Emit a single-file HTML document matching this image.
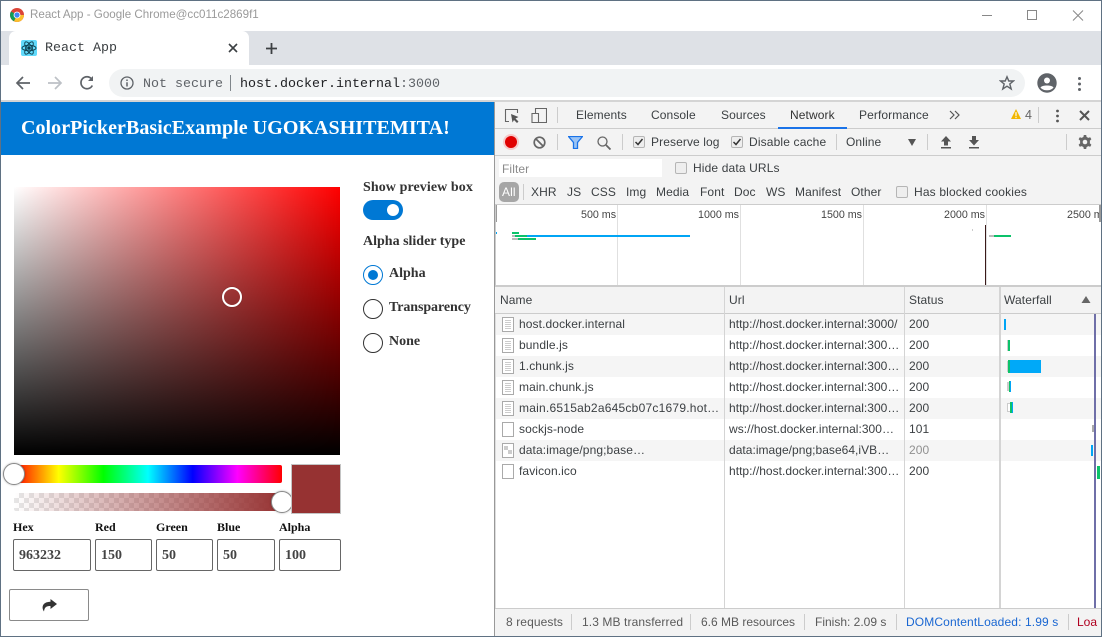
<!DOCTYPE html>
<html><head><meta charset="utf-8"><title>React App</title>
<style>
html,body{margin:0;padding:0;background:#fff}
#r{position:relative;width:1102px;height:637px;overflow:hidden;background:#fff;font-family:"Liberation Sans",sans-serif;font-size:12px;color:#333}
#r div,#r span.a,#r svg{position:absolute}
.t{white-space:nowrap;line-height:14px;height:14px;letter-spacing:.1px}
.u{letter-spacing:.03px}
.ms{font-size:10.700px;color:#444;letter-spacing:0}
.s{font-family:"Liberation Serif",serif;font-weight:bold;white-space:nowrap}
.m{font-family:"Liberation Mono",monospace;font-size:13.33px;white-space:nowrap}
.d{color:#3c4043}
.cb{width:10px;height:10px;border:1px solid #b5b5b5;border-radius:2px;background:#eee}
.sep{width:1px;background:#ccc}
.inp{border:1px solid #666;border-radius:2px;height:30px;background:#fff;box-sizing:content-box;font:bold 14px/32px "Liberation Serif",serif;color:#444}
.lab{font:bold 12px/14px "Liberation Serif",serif;color:#111;top:520px;white-space:nowrap}
.rad{width:18px;height:18px;border:1px solid #333;border-radius:50%;left:363px;background:#fff}
.bar{height:11px}
</style></head><body><div id="r">

<!-- title bar -->
<div style="left:0;top:0;width:1102px;height:31px;background:#fff"></div>
<svg style="left:10px;top:8px" width="14" height="14" viewBox="0 0 14 14"><circle cx="7" cy="7" r="7" fill="#db4437"/><path d="M7 7L1 3.500A7 7 0 0 0 4 13.300Z" fill="#0f9d58"/><path d="M7 7L4 13.300A7 7 0 0 0 14 7Z" fill="#fbc02d"/><circle cx="7" cy="7" r="3.400" fill="#fff"/><circle cx="7" cy="7" r="2.600" fill="#4285f4"/></svg>
<div class="t" style="left:30px;top:8px;font-size:11.600px;letter-spacing:0;color:#9a9a9a">React App - Google Chrome@cc011c2869f1</div>
<svg style="left:980px;top:8px" width="110" height="16" viewBox="0 0 110 16" fill="none" stroke="#888"><path d="M2 7.500H12"/><path d="M47.500 2.500H56.500V11.500H47.500Z"/><path d="M93 2.500L103 12.500M103 2.500L93 12.500"/></svg>

<!-- tab strip -->
<div style="left:0;top:31px;width:1102px;height:34px;background:#dee1e6"></div>
<div style="left:9px;top:31px;width:240px;height:34px;background:#fff;border-radius:7px 7px 0 0"></div>
<div style="left:21px;top:40px;width:16px;height:16px;background:#61dafb;border-radius:2px"></div>
<svg style="left:21px;top:40px" width="16" height="16" viewBox="0 0 16 16" fill="none" stroke="#0b3c4c" stroke-width=".9"><ellipse cx="8" cy="8" rx="7" ry="2.800"/><ellipse cx="8" cy="8" rx="7" ry="2.800" transform="rotate(60 8 8)"/><ellipse cx="8" cy="8" rx="7" ry="2.800" transform="rotate(120 8 8)"/><circle cx="8" cy="8" r="1.300" fill="#0b3c4c"/></svg>
<div class="m d" style="left:45px;top:41px;line-height:16px">React App</div>
<svg style="left:227px;top:42px" width="12" height="12" viewBox="0 0 12 12" stroke="#3c4043" stroke-width="1.600"><path d="M2 2L10 10M10 2L2 10"/></svg>
<svg style="left:265px;top:42px" width="13" height="13" viewBox="0 0 13 13" stroke="#3c4043" stroke-width="1.800"><path d="M6.500 1V12M1 6.500H12"/></svg>

<!-- toolbar -->
<svg style="left:15px;top:75px" width="16" height="16" viewBox="0 0 16 16" fill="none" stroke="#5f6368" stroke-width="1.700"><path d="M15 8H2M8 2L2 8L8 14"/></svg>
<svg style="left:47px;top:75px" width="16" height="16" viewBox="0 0 16 16" fill="none" stroke="#bdc1c6" stroke-width="1.700"><path d="M1 8H14M8 2L14 8L8 14"/></svg>
<svg style="left:79px;top:75px" width="16" height="16" viewBox="0 0 16 16" fill="none" stroke="#5f6368" stroke-width="1.700"><path d="M13.300 10.500A6 6 0 1 1 12.500 3.800"/><path d="M14 1V6H9Z" fill="#5f6368" stroke="none"/></svg>
<div style="left:109px;top:69px;width:916px;height:28px;background:#f1f3f4;border-radius:14px"></div>
<svg style="left:120px;top:76px" width="14" height="14" viewBox="0 0 14 14" fill="none" stroke="#5f6368" stroke-width="1.300"><circle cx="7" cy="7" r="6"/><path d="M7 6.200V10.500M7 3.500V5" stroke-width="1.500"/></svg>
<div class="m" style="left:143px;top:77px;line-height:16px;color:#5f6368">Not secure</div>
<div style="left:230px;top:75px;width:1px;height:16px;background:#80868b"></div>
<div class="m" style="left:240px;top:77px;line-height:16px;color:#202124">host.docker.internal<span style="color:#5f6368">:3000</span></div>
<svg style="left:999px;top:75px" width="16" height="16" viewBox="0 0 16 16" fill="none" stroke="#5f6368" stroke-width="1.400"><path d="M8 1.800L9.800 6H14.500L10.800 9L12.200 14L8 11.200L3.800 14L5.200 9L1.500 6H6.200Z"/></svg>
<svg style="left:1037px;top:73px" width="20" height="20" viewBox="0 0 20 20"><circle cx="10" cy="10" r="9.700" fill="#5f6368"/><circle cx="10" cy="7.500" r="3" fill="#fff"/><path d="M3.500 14.500C5 11.800 15 11.800 16.500 14.500C15 16.500 12.500 17.300 10 17.300C7.500 17.300 5 16.500 3.500 14.500Z" fill="#fff"/></svg>
<svg style="left:1077px;top:76px" width="5" height="16" viewBox="0 0 5 16" fill="#5f6368"><circle cx="2.500" cy="2.500" r="1.500"/><circle cx="2.500" cy="8" r="1.500"/><circle cx="2.500" cy="13.500" r="1.500"/></svg>
<div style="left:0;top:100px;width:1102px;height:2px;background:#d4d4d4"></div>

<!-- page left -->
<div style="left:1px;top:102px;width:493px;height:53px;background:#0078d4"></div>
<div class="s" style="left:21px;top:116px;font-size:20px;letter-spacing:.05px;line-height:24px;color:#fff">ColorPickerBasicExample UGOKASHITEMITA!</div>

<div style="left:14px;top:187px;width:326px;height:268px;background:linear-gradient(to top,#000,rgba(0,0,0,0)),linear-gradient(to right,#fff,#f00)"></div>
<div style="left:222px;top:287px;width:16px;height:16px;border:2px solid #fff;border-radius:50%;box-shadow:0 0 1px rgba(0,0,0,.6)"></div>

<div style="left:14px;top:465px;width:268px;height:18px;border-radius:2px;background:linear-gradient(to right,#f00 0%,#ff0 16.670%,#0f0 33.330%,#0ff 50%,#00f 66.670%,#f0f 83.330%,#f00 100%)"></div>
<div style="left:3px;top:463px;width:20px;height:20px;background:#fff;border:1px solid #8a8a8a;border-radius:50%;box-shadow:0 0 2px rgba(0,0,0,.3)"></div>

<div style="left:14px;top:493px;width:268px;height:18px;border-radius:2px;background:linear-gradient(to right,rgba(150,50,50,0),#963232),conic-gradient(#e6e6e6 25%,#fff 0 50%,#e6e6e6 0 75%,#fff 0) 0 0/10px 10px"></div>
<div style="left:271px;top:491px;width:20px;height:20px;background:#fff;border:1px solid #8a8a8a;border-radius:50%;box-shadow:0 0 2px rgba(0,0,0,.3)"></div>

<div style="left:291px;top:464px;width:48px;height:48px;background:#963232;border:1px solid #c4c4c4"></div>

<div class="lab" style="left:13px">Hex</div>
<div class="lab" style="left:95px">Red</div>
<div class="lab" style="left:156px">Green</div>
<div class="lab" style="left:217px">Blue</div>
<div class="lab" style="left:279px">Alpha</div>
<div class="inp" style="left:13px;top:539px;width:71px;padding-left:5px">963232</div>
<div class="inp" style="left:95px;top:539px;width:50px;padding-left:5px">150</div>
<div class="inp" style="left:156px;top:539px;width:50px;padding-left:5px">50</div>
<div class="inp" style="left:217px;top:539px;width:51px;padding-left:5px">50</div>
<div class="inp" style="left:279px;top:539px;width:55px;padding-left:5px">100</div>

<div style="left:9px;top:589px;width:78px;height:30px;border:1px solid #8a8a8a;border-radius:2px"></div>
<svg style="left:41px;top:598px" width="16" height="14" viewBox="0 0 16 14"><path d="M9.500 1L16 6L9.500 11V8C5.500 8 3.500 9 3 13.500C0.500 10 0.800 4 9.500 3.800Z" fill="#333"/></svg>

<div class="s" style="left:363px;top:180px;font-size:14px;letter-spacing:.08px;line-height:16px;color:#333">Show preview box</div>
<div style="left:363px;top:200px;width:40px;height:20px;background:#0078d4;border-radius:10px"></div>
<div style="left:387px;top:204px;width:12px;height:12px;background:#fff;border-radius:50%"></div>
<div class="s" style="left:363px;top:234px;font-size:14px;line-height:16px;color:#333">Alpha slider type</div>
<div class="rad" style="top:265px;border-color:#0078d4"></div>
<div style="left:368px;top:270px;width:10px;height:10px;background:#0078d4;border-radius:50%"></div>
<div class="rad" style="top:299px"></div>
<div class="rad" style="top:333px"></div>
<div class="s" style="left:389px;top:266px;font-size:14px;line-height:16px;color:#333">Alpha</div>
<div class="s" style="left:389px;top:300px;font-size:14px;letter-spacing:-.08px;line-height:16px;color:#333">Transparency</div>
<div class="s" style="left:389px;top:334px;font-size:14px;line-height:16px;color:#333">None</div>

<!-- devtools -->
<div style="left:494px;top:102px;width:1px;height:535px;background:#999"></div>
<div style="left:495px;top:102px;width:607px;height:26px;background:#f3f3f3"></div>
<div style="left:495px;top:128px;width:607px;height:1px;background:#ccc"></div>
<div style="left:495px;top:129px;width:607px;height:26px;background:#f3f3f3"></div>
<div style="left:495px;top:155px;width:607px;height:1px;background:#ccc"></div>
<div style="left:495px;top:156px;width:607px;height:48px;background:#f3f3f3"></div>
<div style="left:495px;top:204px;width:607px;height:1px;background:#ccc"></div>

<svg style="left:504px;top:108px" width="16" height="16" viewBox="0 0 16 16" fill="none" stroke="#666" stroke-width="1.100"><path d="M5 13.500H1.500V1.500H13.500V5"/><path d="M7 6L14.500 9L11.500 10.500L14.500 13.500L13 15L10 12L8.500 14.500Z" fill="#555" stroke="none"/></svg>
<svg style="left:531px;top:107px" width="16" height="16" viewBox="0 0 16 16" fill="none" stroke="#666" stroke-width="1.100"><path d="M4.500 6V1.500H15.500V15.500H8"/><path d="M1 6.500H7.500V15.500H1Z"/></svg>
<div class="sep" style="left:557px;top:107px;height:16px"></div>
<div class="t d" style="left:576px;top:108px">Elements</div>
<div class="t d" style="left:651px;top:108px">Console</div>
<div class="t d" style="left:721px;top:108px">Sources</div>
<div class="t" style="left:790px;top:108px;color:#333">Network</div>
<div style="left:778px;top:127px;width:69px;height:2px;background:#1a73e8"></div>
<div class="t d" style="left:859px;top:108px">Performance</div>
<svg style="left:949px;top:110px" width="11" height="10" viewBox="0 0 11 10" fill="none" stroke="#555" stroke-width="1.200"><path d="M1 1L5 5L1 9M6 1L10 5L6 9"/></svg>
<svg style="left:1011px;top:109px" width="10" height="10" viewBox="0 0 12 11" preserveAspectRatio="none"><path d="M6 0L12 11H0Z" fill="#f2b600"/><path d="M6 3.500V7.500M6 8.500V10" stroke="#fff" stroke-width="1.400"/></svg>
<div class="t" style="left:1025px;top:108px;color:#666;font-size:12.500px">4</div>
<div class="sep" style="left:1038px;top:107px;height:16px"></div>
<svg style="left:1055px;top:109px" width="5" height="14" viewBox="0 0 5 14" fill="#555"><circle cx="2.500" cy="2" r="1.400"/><circle cx="2.500" cy="7" r="1.400"/><circle cx="2.500" cy="12" r="1.400"/></svg>
<svg style="left:1079px;top:110px" width="11" height="11" viewBox="0 0 11 11" stroke="#555" stroke-width="2"><path d="M1 1L10 10M10 1L1 10"/></svg>

<!-- toolbar row 2 -->
<div style="left:503px;top:134px;width:16px;height:16px;border-radius:50%;background:#f6c9c9"></div>
<div style="left:505px;top:136px;width:12px;height:12px;border-radius:50%;background:#e00000"></div>
<svg style="left:533px;top:136px" width="13" height="13" viewBox="0 0 13 13" fill="none" stroke="#666" stroke-width="1.700"><circle cx="6.500" cy="6.500" r="5.300"/><path d="M3 3L10 10"/></svg>
<div class="sep" style="left:557px;top:134px;height:16px"></div>
<svg style="left:568px;top:136px" width="15" height="13" viewBox="0 0 15 13"><path d="M0.500 0.500H14.500L9.500 6.500V12.500H5.500V6.500Z" fill="#9bc4f5" stroke="#1a73e8" stroke-width="1.300"/></svg>
<svg style="left:597px;top:136px" width="14" height="14" viewBox="0 0 14 14" fill="none" stroke="#666" stroke-width="1.300"><circle cx="5.500" cy="5.500" r="4.500"/><path d="M9 9L13.500 13.500" stroke-width="1.800"/></svg>
<div class="sep" style="left:622px;top:134px;height:16px"></div>
<div class="cb" style="left:633px;top:136px"></div>
<svg style="left:634px;top:137px" width="10" height="10" viewBox="0 0 10 10" fill="none" stroke="#333" stroke-width="1.500"><path d="M1.500 5L4 7.500L8.500 2"/></svg>
<div class="t d" style="left:651px;top:135px">Preserve log</div>
<div class="cb" style="left:731px;top:136px"></div>
<svg style="left:732px;top:137px" width="10" height="10" viewBox="0 0 10 10" fill="none" stroke="#333" stroke-width="1.500"><path d="M1.500 5L4 7.500L8.500 2"/></svg>
<div class="t d" style="left:749px;top:135px;letter-spacing:.15px">Disable cache</div>
<div class="sep" style="left:836px;top:134px;height:16px"></div>
<div class="t d" style="left:846px;top:135px">Online</div>
<svg style="left:908px;top:139px" width="8" height="7" viewBox="0 0 8 7"><path d="M0 0H8L4 7Z" fill="#555"/></svg>
<div class="sep" style="left:927px;top:134px;height:16px"></div>
<svg style="left:940px;top:136px" width="12" height="13" viewBox="0 0 12 13" fill="#555"><path d="M6 0L11 5.500H8V9.500H4V5.500H1Z"/><rect x="1" y="11" width="10" height="1.500"/></svg>
<svg style="left:968px;top:136px" width="12" height="13" viewBox="0 0 12 13" fill="#555"><path d="M4 0H8V4H11L6 9.500L1 4H4Z"/><rect x="1" y="11" width="10" height="1.500"/></svg>
<div class="sep" style="left:1066px;top:134px;height:16px"></div>
<svg style="left:1077px;top:134px" width="16" height="16" viewBox="0 0 16 16"><path d="M6.800 1H9.200L9.600 3A5.200 5.200 0 0 1 11.200 3.900L13.200 3.200L14.400 5.300L12.800 6.700A5.200 5.200 0 0 1 12.800 9.300L14.400 10.700L13.200 12.800L11.200 12.100A5.200 5.200 0 0 1 9.600 13L9.200 15H6.800L6.400 13A5.200 5.200 0 0 1 4.800 12.100L2.800 12.800L1.600 10.700L3.200 9.300A5.200 5.200 0 0 1 3.200 6.700L1.600 5.300L2.800 3.200L4.800 3.900A5.200 5.200 0 0 1 6.400 3Z" fill="#666"/><circle cx="8" cy="8" r="2.300" fill="#f3f3f3"/></svg>

<!-- filter -->
<div style="left:499px;top:159px;width:163px;height:18px;background:#fff"></div>
<div class="t" style="left:502px;top:162px;color:#8a8a8a">Filter</div>
<div class="cb" style="left:675px;top:162px"></div>
<div class="t d" style="left:693px;top:161px;letter-spacing:.14px">Hide data URLs</div>
<div style="left:499px;top:182px;width:20px;height:20px;background:#a6a6a6;border-radius:5px"></div>
<div class="t" style="left:502px;top:185px;color:#fff">All</div>
<div class="sep" style="left:523px;top:184px;height:16px"></div>
<div class="t d" style="left:531px;top:185px">XHR</div>
<div class="t d" style="left:567px;top:185px">JS</div>
<div class="t d" style="left:591px;top:185px">CSS</div>
<div class="t d" style="left:626px;top:185px">Img</div>
<div class="t d" style="left:656px;top:185px">Media</div>
<div class="t d" style="left:700px;top:185px">Font</div>
<div class="t d" style="left:734px;top:185px">Doc</div>
<div class="t d" style="left:766px;top:185px">WS</div>
<div class="t d" style="left:795px;top:185px">Manifest</div>
<div class="t d" style="left:851px;top:185px">Other</div>
<div class="cb" style="left:896px;top:186px"></div>
<div class="t d" style="left:914px;top:185px;letter-spacing:.16px">Has blocked cookies</div>

<!-- overview -->
<div style="left:495px;top:205px;width:607px;height:80px;background:#fff"></div>
<div style="left:617px;top:205px;width:1px;height:80px;background:#e0e0e0"></div>
<div style="left:740px;top:205px;width:1px;height:80px;background:#e0e0e0"></div>
<div style="left:863px;top:205px;width:1px;height:80px;background:#e0e0e0"></div>
<div style="left:986px;top:205px;width:1px;height:80px;background:#e0e0e0"></div>
<div class="t ms" style="left:581px;top:208px">500 ms</div>
<div class="t ms" style="left:698px;top:208px">1000 ms</div>
<div class="t ms" style="left:821px;top:208px">1500 ms</div>
<div class="t ms" style="left:944px;top:208px">2000 ms</div>
<div class="t ms" style="left:1067px;top:208px;width:33px;overflow:hidden">2500 ms</div>
<div style="left:495px;top:205px;width:2px;height:17px;background:#9a9a9a"></div>
<div style="left:1099px;top:205px;width:2px;height:17px;background:#9a9a9a"></div>
<div style="left:495px;top:232px;width:2px;height:2px;background:#00a5f5"></div>
<div style="left:512px;top:232px;width:7px;height:2px;background:#0cc26a"></div>
<div style="left:512px;top:235px;width:3px;height:2px;background:#bbb"></div>
<div style="left:515px;top:235px;width:12px;height:2px;background:#0cc26a"></div>
<div style="left:527px;top:235px;width:163px;height:2px;background:#00a5f5"></div>
<div style="left:512px;top:238px;width:6px;height:2px;background:#bbb"></div>
<div style="left:518px;top:238px;width:11px;height:2px;background:#0cc26a"></div>
<div style="left:529px;top:238px;width:7px;height:2px;background:#0cc26a"></div>
<div style="left:972px;top:229px;width:1px;height:2px;background:#ccc"></div>
<div style="left:985px;top:225px;width:1px;height:60px;background:#3a1a1a"></div>
<div style="left:989px;top:235px;width:5px;height:2px;background:#bbb"></div>
<div style="left:994px;top:235px;width:17px;height:2px;background:#0cc26a"></div>
<div style="left:495px;top:205px;width:1px;height:80px;background:#ccc"></div>
<div style="left:495px;top:285px;width:607px;height:2px;background:#ccc"></div>

<!-- table header -->
<div style="left:495px;top:287px;width:607px;height:26px;background:#f3f3f3"></div>
<div style="left:495px;top:313px;width:607px;height:1px;background:#ccc"></div>
<div class="t d" style="left:500px;top:293px">Name</div>
<div class="t d" style="left:729px;top:293px">Url</div>
<div class="t d" style="left:909px;top:293px">Status</div>
<div class="t d" style="left:1004px;top:293px">Waterfall</div>
<svg style="left:1081px;top:296px" width="10" height="7" viewBox="0 0 10 7"><path d="M5 0L9.500 7H.5Z" fill="#666"/></svg>

<!-- rows -->
<div style="left:495px;top:314px;width:607px;height:21px;background:#f5f5f5"></div>
<div style="left:495px;top:356px;width:607px;height:21px;background:#f5f5f5"></div>
<div style="left:495px;top:398px;width:607px;height:21px;background:#f5f5f5"></div>
<div style="left:495px;top:440px;width:607px;height:21px;background:#f5f5f5"></div>

<div style="left:495px;top:314px;width:1px;height:294px;background:#ddd"></div>
<div style="left:724px;top:287px;width:1px;height:321px;background:#d4d4d4"></div>
<div style="left:904px;top:287px;width:1px;height:321px;background:#d4d4d4"></div>
<div style="left:999px;top:287px;width:2px;height:321px;background:#d4d4d4"></div>

<svg style="left:502px;top:317px" width="12" height="15" viewBox="0 0 12 15" fill="#fff" stroke="#aaa"><path d="M.5.5H11.500V14.500H.5Z"/><path d="M3 3.500H9M3 5.500H9M3 7.500H9M3 9.500H9M3 11.500H9" stroke="#ccc"/></svg>
<svg style="left:502px;top:338px" width="12" height="15" viewBox="0 0 12 15" fill="#fff" stroke="#aaa"><path d="M.5.5H11.500V14.500H.5Z"/><path d="M3 3.500H9M3 5.500H9M3 7.500H9M3 9.500H9M3 11.500H9" stroke="#ccc"/></svg>
<svg style="left:502px;top:359px" width="12" height="15" viewBox="0 0 12 15" fill="#fff" stroke="#aaa"><path d="M.5.5H11.500V14.500H.5Z"/><path d="M3 3.500H9M3 5.500H9M3 7.500H9M3 9.500H9M3 11.500H9" stroke="#ccc"/></svg>
<svg style="left:502px;top:380px" width="12" height="15" viewBox="0 0 12 15" fill="#fff" stroke="#aaa"><path d="M.5.5H11.500V14.500H.5Z"/><path d="M3 3.500H9M3 5.500H9M3 7.500H9M3 9.500H9M3 11.500H9" stroke="#ccc"/></svg>
<svg style="left:502px;top:401px" width="12" height="15" viewBox="0 0 12 15" fill="#fff" stroke="#aaa"><path d="M.5.5H11.500V14.500H.5Z"/><path d="M3 3.500H9M3 5.500H9M3 7.500H9M3 9.500H9M3 11.500H9" stroke="#ccc"/></svg>
<svg style="left:502px;top:422px" width="12" height="15" viewBox="0 0 12 15" fill="#fff" stroke="#aaa"><path d="M.5.5H11.500V14.500H.5Z"/></svg>
<svg style="left:502px;top:443px" width="12" height="15" viewBox="0 0 12 15" fill="#fff" stroke="#aaa"><path d="M.5.5H11.500V14.500H.5Z"/><path d="M2 3H6V7H2ZM6 7H10V11H6Z" fill="#ccc" stroke="none"/></svg>
<svg style="left:502px;top:464px" width="12" height="15" viewBox="0 0 12 15" fill="#fff" stroke="#aaa"><path d="M.5.5H11.500V14.500H.5Z"/></svg>

<div class="t d" style="left:519px;top:317px">host.docker.internal</div>
<div class="t d" style="left:519px;top:338px">bundle.js</div>
<div class="t d" style="left:519px;top:359px">1.chunk.js</div>
<div class="t d" style="left:519px;top:380px">main.chunk.js</div>
<div class="t d" style="left:519px;top:401px;letter-spacing:.23px">main.6515ab2a645cb07c1679.hot…</div>
<div class="t d" style="left:519px;top:422px">sockjs-node</div>
<div class="t d" style="left:519px;top:443px">data:image/png;base…</div>
<div class="t d" style="left:519px;top:464px">favicon.ico</div>

<div class="t d u" style="left:729px;top:317px">http://host.docker.internal:3000/</div>
<div class="t d u" style="left:729px;top:338px">http://host.docker.internal:300…</div>
<div class="t d u" style="left:729px;top:359px">http://host.docker.internal:300…</div>
<div class="t d u" style="left:729px;top:380px">http://host.docker.internal:300…</div>
<div class="t d u" style="left:729px;top:401px">http://host.docker.internal:300…</div>
<div class="t d u" style="left:729px;top:422px">ws://host.docker.internal:300…</div>
<div class="t d u" style="left:729px;top:443px">data:image/png;base64,iVB…</div>
<div class="t d u" style="left:729px;top:464px">http://host.docker.internal:300…</div>

<div class="t d" style="left:909px;top:317px">200</div>
<div class="t d" style="left:909px;top:338px">200</div>
<div class="t d" style="left:909px;top:359px">200</div>
<div class="t d" style="left:909px;top:380px">200</div>
<div class="t d" style="left:909px;top:401px">200</div>
<div class="t d" style="left:909px;top:422px">101</div>
<div class="t" style="left:909px;top:443px;color:#909090">200</div>
<div class="t d" style="left:909px;top:464px">200</div>

<!-- waterfall -->
<div class="bar" style="left:1004px;top:319px;width:2px;background:#00a5f5"></div>
<div class="bar" style="left:1007px;top:340px;width:1px;background:#ccc"></div>
<div class="bar" style="left:1008px;top:340px;width:2px;background:#0cc26a"></div>
<div class="bar" style="left:1007px;top:361px;width:1px;background:#ccc"></div>
<div class="bar" style="left:1008px;top:360px;width:2px;height:13px;background:#0cc26a"></div>
<div style="left:1010px;top:360px;width:31px;height:13px;background:#00a9f8"></div>
<div class="bar" style="left:1007px;top:382px;width:2px;height:9px;background:#ccc"></div>
<div class="bar" style="left:1009px;top:381px;width:1px;background:#0cc26a"></div>
<div class="bar" style="left:1010px;top:381px;width:1px;background:#00a5f5"></div>
<div class="bar" style="left:1007px;top:403px;width:3px;height:7px;border:1px solid #ccc;background:#fff"></div>
<div class="bar" style="left:1010px;top:402px;width:2px;background:#0cc26a"></div>
<div class="bar" style="left:1012px;top:402px;width:1px;background:#00a5f5"></div>
<div style="left:1092px;top:425px;width:3px;height:7px;background:#aaa"></div>
<div class="bar" style="left:1091px;top:445px;width:2px;background:#00a5f5"></div>
<div class="bar" style="left:1097px;top:466px;width:3px;height:13px;background:#0cc26a"></div>
<div style="left:1094px;top:314px;width:2px;height:294px;background:#6f6fa8"></div>

<!-- status -->
<div style="left:495px;top:608px;width:607px;height:1px;background:#ccc"></div>
<div style="left:495px;top:609px;width:607px;height:27px;background:#f3f3f3"></div>
<div class="t" style="left:506px;top:615px;color:#5a5a5a">8 requests</div>
<div class="sep" style="left:571px;top:614px;height:16px"></div>
<div class="t" style="left:582px;top:615px;color:#5a5a5a">1.3 MB transferred</div>
<div class="sep" style="left:690px;top:614px;height:16px"></div>
<div class="t" style="left:701px;top:615px;letter-spacing:0;color:#5a5a5a">6.6 MB resources</div>
<div class="sep" style="left:804px;top:614px;height:16px"></div>
<div class="t" style="left:815px;top:615px;letter-spacing:0;color:#5a5a5a">Finish: 2.09 s</div>
<div class="sep" style="left:896px;top:614px;height:16px"></div>
<div class="t" style="left:906px;top:615px;letter-spacing:.125px;color:#1a67d2">DOMContentLoaded: 1.99 s</div>
<div class="sep" style="left:1068px;top:614px;height:16px"></div>
<div class="t" style="left:1077px;top:615px;letter-spacing:0;color:#b00020;width:21px;overflow:hidden">Loa</div>

<!-- window border -->
<div style="left:0;top:0;width:1100px;height:635px;border:1px solid #5f7183"></div>
</div></body></html>
